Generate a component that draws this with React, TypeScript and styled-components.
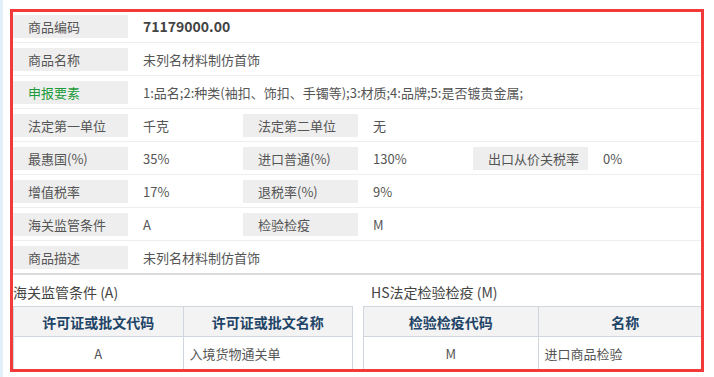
import styled, { createGlobalStyle } from 'styled-components';

const GlobalStyle = createGlobalStyle`
  html, body {
    margin: 0;
    padding: 0;
    background: #fff;
  }
  body {
    font-family: "Noto Sans CJK SC", "Liberation Sans", sans-serif;
    font-size: 13px;
    color: #555;
  }
`;

const Page = styled.div`
  display: flex;
  width: 714px;
  height: 377px;
  overflow: hidden;
`;

const SideStrip = styled.div`
  width: 3px;
  flex: none;
  background: #e4f0f9;
`;

const Frame = styled.div`
  margin: 9px 0 0 7px;
  width: 688px;
  height: 357px;
  border: 3px solid #f23a3a;
  overflow: hidden;
`;

const Row = styled.div<{ $last?: boolean }>`
  display: grid;
  grid-template-columns: repeat(5, 115px) 1fr;
  align-items: center;
  padding: 5px 0 4px;
  border-bottom: ${(p) => (p.$last ? '2px solid #dcdcdc' : '1px solid #eee')};

  &:first-child {
    padding-top: 3px;
  }
`;

const Label = styled.div<{ $green?: boolean }>`
  height: 23px;
  line-height: 23px;
  padding-left: 15px;
  background: #eee;
  color: ${(p) => (p.$green ? '#1c9b3a' : '#555')};
  white-space: nowrap;
`;

const Value = styled.div<{ $span?: number; $bold?: boolean }>`
  grid-column: span ${(p) => p.$span ?? 1};
  line-height: 23px;
  padding-left: 15px;
  white-space: nowrap;
  color: ${(p) => (p.$bold ? '#444' : '#555')};
  font-weight: ${(p) => (p.$bold ? 700 : 400)};
  font-size: ${(p) => (p.$bold ? '14px' : '13px')};
`;

const Lower = styled.div`
  display: flex;
  align-items: flex-start;
`;

const Block = styled.div<{ $width: number; $offset?: number }>`
  width: ${(p) => p.$width}px;
  flex: none;
  margin-left: ${(p) => p.$offset ?? 0}px;
`;

const Title = styled.div<{ $indent?: number }>`
  height: 31px;
  line-height: 34px;
  padding-left: ${(p) => p.$indent ?? 0}px;
  font-size: 14px;
  color: #444;
  white-space: nowrap;
`;

const Grid = styled.table`
  width: 100%;
  border-collapse: collapse;
  table-layout: fixed;
`;

const Head = styled.th`
  height: 29px;
  padding: 0;
  background: #f3f3f3;
  border: 1px solid #cfd6de;
  color: #1e4467;
  font-size: 14px;
  font-weight: 700;
  text-align: center;
`;

const Cell = styled.td<{ $center?: boolean }>`
  height: 33px;
  padding: 0 0 0 ${(p) => (p.$center ? 0 : 6)}px;
  border: 1px solid #cfd6de;
  text-align: ${(p) => (p.$center ? 'center' : 'left')};
  color: #555;
  font-size: 13px;
`;

export default function App() {
  return (
    <>
      <GlobalStyle />
      <Page>
        <SideStrip />
        <Frame>
          <Row>
            <Label>商品编码</Label>
            <Value $span={5} $bold>71179000.00</Value>
          </Row>
          <Row>
            <Label>商品名称</Label>
            <Value $span={5}>未列名材料制仿首饰</Value>
          </Row>
          <Row>
            <Label $green>申报要素</Label>
            <Value $span={5}>1:品名;2:种类(袖扣、饰扣、手镯等);3:材质;4:品牌;5:是否镀贵金属;</Value>
          </Row>
          <Row>
            <Label>法定第一单位</Label>
            <Value>千克</Value>
            <Label>法定第二单位</Label>
            <Value $span={3}>无</Value>
          </Row>
          <Row>
            <Label>最惠国(%)</Label>
            <Value>35%</Value>
            <Label>进口普通(%)</Label>
            <Value>130%</Value>
            <Label>出口从价关税率</Label>
            <Value>0%</Value>
          </Row>
          <Row>
            <Label>增值税率</Label>
            <Value>17%</Value>
            <Label>退税率(%)</Label>
            <Value $span={3}>9%</Value>
          </Row>
          <Row>
            <Label>海关监管条件</Label>
            <Value>A</Value>
            <Label>检验检疫</Label>
            <Value $span={3}>M</Value>
          </Row>
          <Row $last>
            <Label>商品描述</Label>
            <Value $span={5}>未列名材料制仿首饰</Value>
          </Row>
          <Lower>
            <Block $width={340}>
              <Title>海关监管条件 (A)</Title>
              <Grid>
                <thead>
                  <tr>
                    <Head>许可证或批文代码</Head>
                    <Head>许可证或批文名称</Head>
                  </tr>
                </thead>
                <tbody>
                  <tr>
                    <Cell $center>A</Cell>
                    <Cell>入境货物通关单</Cell>
                  </tr>
                </tbody>
              </Grid>
            </Block>
            <Block $width={350} $offset={10}>
              <Title $indent={8}>HS法定检验检疫 (M)</Title>
              <Grid>
                <thead>
                  <tr>
                    <Head>检验检疫代码</Head>
                    <Head>名称</Head>
                  </tr>
                </thead>
                <tbody>
                  <tr>
                    <Cell $center>M</Cell>
                    <Cell>进口商品检验</Cell>
                  </tr>
                </tbody>
              </Grid>
            </Block>
          </Lower>
        </Frame>
      </Page>
    </>
  );
}
